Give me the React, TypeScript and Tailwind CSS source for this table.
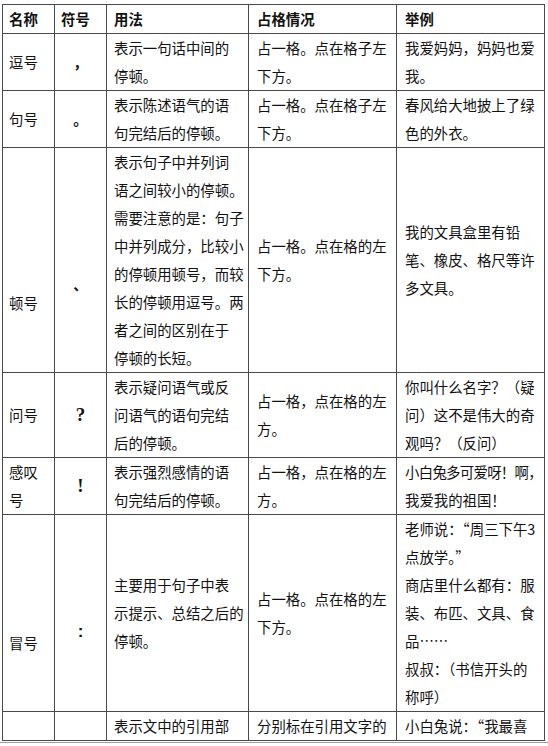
import type { ReactNode } from 'react';

type Row = {
  name: string[];
  symbol: ReactNode;
  usage: string[];
  place: string[];
  example: ReactNode[];
  nameClass?: string;
  symbolClass?: string;
};

const cjk = "[font-family:'Noto_Sans_CJK_SC','Noto_Sans',sans-serif]";

const rows: Row[] = [
  {
    name: ['逗号'],
    symbol: <span className="font-bold">，</span>,
    usage: ['表示一句话中间的', '停顿。'],
    place: ['占一格。点在格子左', '下方。'],
    example: ['我爱妈妈，妈妈也爱', '我。'],
  },
  {
    name: ['句号'],
    symbol: <span className="font-bold">。</span>,
    usage: ['表示陈述语气的语', '句完结后的停顿。'],
    place: ['占一格。点在格子左', '下方。'],
    example: ['春风给大地披上了绿', '色的外衣。'],
  },
  {
    name: ['顿号'],
    symbol: <span className="font-bold">、</span>,
    usage: [
      '表示句子中并列词',
      '语之间较小的停顿。',
      '需要注意的是：句子',
      '中并列成分，比较小',
      '的停顿用顿号，而较',
      '长的停顿用逗号。两',
      '者之间的区别在于',
      '停顿的长短。',
    ],
    place: ['占一格。点在格的左', '下方。'],
    example: ['我的文具盒里有铅', '笔、橡皮、格尺等许', '多文具。'],
    nameClass: 'align-top pt-[141px]',
    symbolClass: 'align-top pt-[122px]',
  },
  {
    name: ['问号'],
    symbol: <span className="font-bold text-[19px] [font-family:'Liberation_Serif',serif]">?</span>,
    usage: ['表示疑问语气或反', '问语气的语句完结', '后的停顿。'],
    place: ['占一格，点在格的左', '方。'],
    example: ['你叫什么名字？（疑', '问）这不是伟大的奇', '观吗？（反问）'],
  },
  {
    name: ['感叹', '号'],
    symbol: <span className="font-bold text-[19px] [font-family:'Liberation_Serif',serif]">!</span>,
    usage: ['表示强烈感情的语', '句完结后的停顿。'],
    place: ['占一格，点在格的左', '方。'],
    example: [<span key="a" className="tracking-[-0.7px]">小白兔多可爱呀！啊，</span>, '我爱我的祖国！'],
  },
  {
    name: ['冒号'],
    symbol: <span className="font-bold text-[17px] [font-family:'Liberation_Sans',sans-serif]">:</span>,
    usage: ['主要用于句子中表', '示提示、总结之后的', '停顿。'],
    place: ['占一格。点在格的左', '下方。'],
    example: [
      '老师说：“周三下午3',
      '点放学。”',
      '商店里什么都有：服',
      '装、布匹、文具、食',
      '品……',
      '叔叔：（书信开头的',
      '称呼）',
    ],
    nameClass: 'align-top pt-[114px]',
    symbolClass: 'align-top pt-[102px]',
  },
  {
    name: [],
    symbol: null,
    usage: ['表示文中的引用部'],
    place: ['分别标在引用文字的'],
    example: ['小白兔说：“我最喜'],
  },
];

function Lines({ items }: { items: ReactNode[] }) {
  return (
    <>
      {items.map((t, i) => (
        <div key={i} className="whitespace-nowrap">
          {t}
        </div>
      ))}
    </>
  );
}

const cell = 'border border-[#4a4a4a] p-0';

export default function App() {
  return (
    <div className={`w-[548px] h-[746px] bg-white text-[#111] ${cjk}`}>
      <div className="h-[743px] overflow-hidden border-b border-[#a0a0a0] pt-[4px] pl-[2px]">
        <table className="table-fixed border-collapse w-[542px] text-[14.4px] leading-[28px]">
          <colgroup>
            <col className="w-[52px]" />
            <col className="w-[52px]" />
            <col className="w-[142px]" />
            <col className="w-[148px]" />
            <col className="w-[148px]" />
          </colgroup>
          <thead>
            <tr className="font-bold">
              <th className={`${cell} text-left pl-[6px] font-bold`}>名称</th>
              <th className={`${cell} text-left pl-[6px] font-bold`}>符号</th>
              <th className={`${cell} text-left pl-[7px] font-bold`}>用法</th>
              <th className={`${cell} text-left pl-[8px] font-bold`}>占格情况</th>
              <th className={`${cell} text-left pl-[8px] font-bold`}>举例</th>
            </tr>
          </thead>
          <tbody>
            {rows.map((r, i) => (
              <tr key={i}>
                <td className={`${cell} pl-[6px] ${r.nameClass ?? 'align-middle'}`}>
                  <Lines items={r.name} />
                </td>
                <td className={`${cell} text-center ${r.symbolClass ?? 'align-middle'}`}>{r.symbol}</td>
                <td className={`${cell} pl-[7px] align-middle`}>
                  <Lines items={r.usage} />
                </td>
                <td className={`${cell} pl-[8px] align-middle`}>
                  <Lines items={r.place} />
                </td>
                <td className={`${cell} pl-[8px] align-middle`}>
                  <Lines items={r.example} />
                </td>
              </tr>
            ))}
          </tbody>
        </table>
      </div>
    </div>
  );
}
